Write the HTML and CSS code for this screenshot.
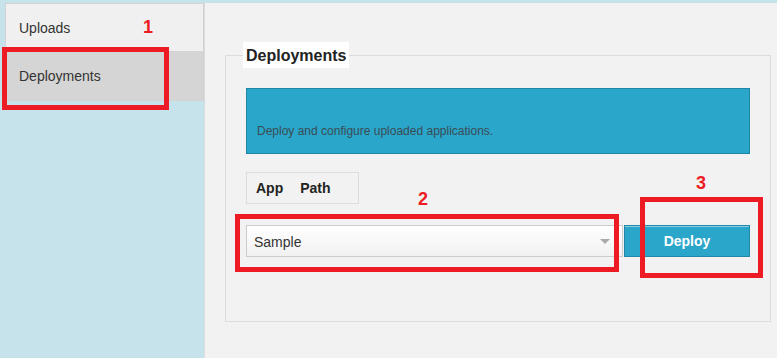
FILE: index.html
```html
<!DOCTYPE html>
<html lang="en">
<head>
<meta charset="utf-8">
<title>Deployments</title>
<link rel="stylesheet" href="styles.css">
</head>
<body>
<div class="layout">
  <aside class="sidebar">
    <nav class="nav">
      <a class="nav-item">Uploads</a>
      <a class="nav-item nav-item-active">Deployments</a>
    </nav>
  </aside>
  <main class="main">
    <fieldset class="panel">
      <legend class="panel-title">Deployments</legend>
      <div class="info-box">Deploy and configure uploaded applications.</div>
      <div class="tabs">
        <span class="tab">App</span>
        <span class="tab">Path</span>
      </div>
      <div class="deploy-row">
        <div class="select">
          <span class="select-value">Sample</span>
          <span class="select-arrow"></span>
        </div>
        <button class="btn-deploy" type="button">Deploy</button>
      </div>
    </fieldset>
  </main>
</div>

<div class="mark mark-1"></div>
<div class="mark mark-2"></div>
<div class="mark mark-3"></div>
<div class="mark-num num-1">1</div>
<div class="mark-num num-2">2</div>
<div class="mark-num num-3">3</div>
</body>
</html>
```
FILE: styles.css
```css
* { box-sizing: border-box; }

html, body {
  margin: 0;
  padding: 0;
}

body {
  position: relative;
  width: 777px;
  height: 358px;
  overflow: hidden;
  background: #c6e2ea;
  font-family: "Liberation Sans", Arial, sans-serif;
  color: #333;
}

.layout {
  display: flex;
  height: 358px;
  padding-top: 3px;
}

.sidebar {
  width: 204px;
  padding-left: 5px;
  flex: none;
}

.nav {
  display: flex;
  flex-direction: column;
  border: 1px solid #d3d3d3;
  border-right-color: #cfcfcf;
}

.nav-item {
  display: block;
  height: 48px;
  padding-top: 1px;
  line-height: 46px;
  padding-left: 13px;
  font-size: 14px;
  color: #333;
  background: #f0f0f0;
  border-bottom: 1px solid #d3d3d3;
}

.nav-item-active {
  background: #d5d5d5;
  height: 48px;
  line-height: 47px;
  border-bottom: 0;
}

.main {
  flex: 1;
  background: #f2f2f2;
  border-left: 1px solid #dcdcdc;
}

.panel {
  margin: 39px 6px 0 20px;
  padding: 20px 20px 64px 20px;
  border: 1px solid #dcdcdc;
  min-width: 0;
}

.panel-title {
  margin-left: -3px;
  padding: 1px 3px 0;
  background: #fff;
  font-size: 16px;
  font-weight: bold;
  line-height: 25px;
  color: #222;
}

.info-box {
  background: #2aa6cb;
  border: 1px solid #1f86a7;
  padding: 35px 10px 15px;
  font-size: 12px;
  line-height: 14px;
  color: #3a4c53;
}

.tabs {
  display: flex;
  gap: 17px;
  width: 113px;
  height: 32px;
  margin-top: 18px;
  padding-left: 9px;
  border: 1px solid #dcdcdc;
  font-size: 14px;
  font-weight: bold;
  line-height: 30px;
  color: #222;
}

.deploy-row {
  display: flex;
  margin-top: 21px;
}

.select {
  display: flex;
  align-items: center;
  width: 377px;
  height: 32px;
  padding: 2px 12px 0 7px;
  border: 1px solid #cccccc;
  background: linear-gradient(#ffffff, #f1f1f1);
  font-size: 14px;
  color: #333;
}

.select-arrow {
  margin-left: auto;
  margin-top: -2px;
  width: 0;
  height: 0;
  border-left: 5px solid transparent;
  border-right: 5px solid transparent;
  border-top: 5px solid #aaaaaa;
}

.btn-deploy {
  margin-left: 1px;
  width: 126px;
  height: 32px;
  background: #2aa6cb;
  border: 1px solid #2387a7;
  box-shadow: inset 0 1px 0 rgba(255, 255, 255, 0.45);
  color: #fff;
  font-family: "Liberation Sans", Arial, sans-serif;
  font-size: 14px;
  font-weight: bold;
  padding: 0;
}

/* annotation overlays */
.mark {
  position: absolute;
  border: 5px solid #ed1c24;
}

.mark-1 { left: 2px; top: 47px; width: 167px; height: 63px; }
.mark-2 { left: 235px; top: 214px; width: 384px; height: 58px; }
.mark-3 { left: 640px; top: 197px; width: 123px; height: 81px; }

.mark-num {
  position: absolute;
  font-size: 18px;
  font-weight: bold;
  line-height: 18px;
  color: #ed1c24;
}

.num-1 { left: 143px; top: 18px; }
.num-2 { left: 418px; top: 190px; }
.num-3 { left: 696px; top: 174px; }
```
